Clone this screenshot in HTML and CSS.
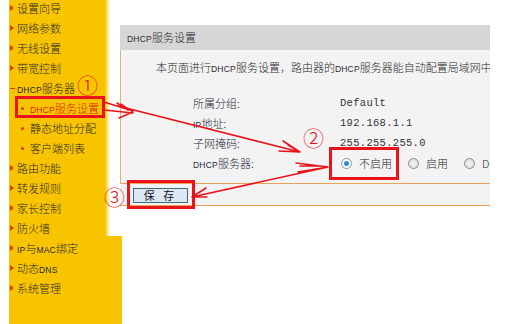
FILE: index.html
```html
<!DOCTYPE html>
<html lang="zh-CN">
<head>
    <meta charset="UTF-8">
    <title>DHCP服务设置</title>
    <link rel="stylesheet" href="styles.css">
</head>
<body>
    <div class="page">
        <ul class="menu">
            <li class="item">设置向导</li>
            <li class="item">网络参数</li>
            <li class="item">无线设置</li>
            <li class="item">带宽控制</li>
            <li class="item open"><span class="en">DHCP</span>服务器</li>
            <li class="sub current"><span class="en">DHCP</span>服务设置</li>
            <li class="sub">静态地址分配</li>
            <li class="sub">客户端列表</li>
            <li class="item">路由功能</li>
            <li class="item">转发规则</li>
            <li class="item">家长控制</li>
            <li class="item">防火墙</li>
            <li class="item"><span class="en">IP</span>与<span class="en">MAC</span>绑定</li>
            <li class="item">动态<span class="en">DNS</span></li>
            <li class="item">系统管理</li>
        </ul>
        <div class="main">
            <div class="panel">
                <div class="panel-head"><span class="en">DHCP</span>服务设置</div>
                <div class="panel-body">
                    <p class="desc">本页面进行<span class="en">DHCP</span>服务设置，路由器的<span class="en">DHCP</span>服务器能自动配置局域网中各</p>
                    <div class="row"><span class="label">所属分组:</span><span class="value mono">Default</span></div>
                    <div class="row"><span class="label"><span class="en">IP</span>地址:</span><span class="value mono">192.168.1.1</span></div>
                    <div class="row"><span class="label">子网掩码:</span><span class="value mono">255.255.255.0</span></div>
                    <div class="row">
                        <span class="label"><span class="en">DHCP</span>服务器:</span>
                        <span class="value radios">
                            <span class="radio checked"></span><span class="opt">不启用</span>
                            <span class="radio"></span><span class="opt">启用</span>
                            <span class="radio"></span><span class="opt">D</span>
                        </span>
                    </div>
                </div>
                <div class="panel-foot">
                    <button class="btn">保 存</button>
                </div>
            </div>
        </div>
    </div>

    <svg class="marks" width="527" height="324" viewBox="0 0 527 324">
        <g fill="none" stroke="#e8141a" stroke-linecap="round">
            <rect x="16.5" y="97.5" width="87" height="19" stroke-width="3"/>
            <rect x="330.5" y="148.5" width="67" height="30" stroke-width="3"/>
            <rect x="128.5" y="181.5" width="65" height="26" stroke-width="3"/>
            <path d="M104 102 L133 111 M104 110 L133 113 M133 112 L121 104 M133 112 L119 118 M128 110 L117 103" stroke-width="1.5"/>
            <path d="M118 106 L300 152 M300 152 L283 141 M300 152 L279 151 M300 152 L288 145" stroke-width="1.5"/>
            <path d="M328 167 L192 197 M192 197 L206 188 M192 197 L207 197 M328 167 L296 163 M328 167 L298 172 M318 166 L300 166" stroke-width="1.5"/>
        </g>
        <g fill="#e8141a" font-family="'Noto Sans CJK SC', sans-serif" font-size="21">
            <text x="77" y="93">①</text>
            <text x="303" y="146">②</text>
            <text x="104" y="205">③</text>
        </g>
    </svg>
</body>
</html>
```

FILE: styles.css
```css
* {
    margin: 0;
    padding: 0;
    box-sizing: border-box;
}
body {
    width: 527px;
    height: 324px;
    overflow: hidden;
    background: #ffffff;
    font-family: 'Noto Sans CJK SC', 'DejaVu Sans', sans-serif;
    font-weight: 300;
    color: #2a2a2a;
    position: relative;
}
.en {
    font-family: 'Liberation Sans', sans-serif;
    font-size: 8.5px;
    letter-spacing: 0.2px;
}
.page {
    display: flex;
    height: 324px;
}
.menu {
    list-style: none;
    margin-left: 9px;
    width: 113px;
    flex-shrink: 0;
    background: #f8c400;
    margin-top: -2px;
    height: 326px;
}
.menu li {
    height: 20px;
    line-height: 20px;
    font-size: 11px;
    position: relative;
    white-space: nowrap;
}
.item {
    padding-left: 8px;
}
.item::before {
    content: '';
    position: absolute;
    left: 1px;
    top: 7px;
    border-left: 4px solid #e03a10;
    border-top: 3px solid transparent;
    border-bottom: 3px solid transparent;
}
.item.open::before {
    border: none;
    width: 5px;
    height: 1px;
    top: 10px;
    background: #e03a10;
}
.sub {
    padding-left: 21px;
}
.sub::before {
    content: '';
    position: absolute;
    left: 12px;
    top: 9px;
    width: 3px;
    height: 3px;
    background: #e03a10;
    border-radius: 50%;
}
.sub.current {
    color: #d42a10;
}
.main {
    flex: 1;
    margin-left: -17px;
    height: 236px;
    background: linear-gradient(to right, rgba(255,255,255,0) 0, #ffffff 5px);
    padding-top: 25px;
    padding-left: 15px;
    overflow: hidden;
}
.panel {
    width: 370px;
    overflow: hidden;
}
.panel-head {
    height: 25px;
    line-height: 25px;
    background: #d6d6d6;
    padding-left: 7px;
    font-size: 11px;
    white-space: nowrap;
}
.panel-body {
    background: #f3f3f3;
    border-left: 1px solid #e2b37a;
    border-bottom: 1px solid #e9a45a;
    height: 134px;
    padding-top: 10px;
}
.desc {
    font-size: 11px;
    line-height: 14px;
    padding-left: 35px;
    white-space: nowrap;
    overflow: hidden;
    margin-bottom: 17px;
}
.row {
    display: flex;
    height: 20px;
    line-height: 20px;
    font-size: 11px;
    white-space: nowrap;
}
.label {
    width: 219px;
    padding-left: 72px;
    flex-shrink: 0;
    color: #1e2a3a;
}
.mono {
    font-family: 'Liberation Mono', monospace;
    font-size: 10.5px;
    color: #333;
    letter-spacing: 0.3px;
}
.radios {
    display: flex;
    align-items: center;
    font-size: 11px;
}
.radio {
    width: 11px;
    height: 11px;
    border-radius: 50%;
    border: 1px solid #8a8a8a;
    background: radial-gradient(circle, #f4f4f4 0, #d8d8d8 100%);
    margin-left: 1px;
    margin-right: 7px;
    position: relative;
    flex-shrink: 0;
}
.radio.checked {
    background: #ffffff;
    border-color: #7a9ab8;
}
.radio.checked::after {
    content: '';
    position: absolute;
    left: 2px;
    top: 2px;
    width: 5px;
    height: 5px;
    border-radius: 50%;
    background: #2a8fd0;
}
.opt {
    margin-right: 15px;
}
.panel-foot {
    background: #f3f3f3;
    border-bottom: 1px solid #e9a45a;
    height: 22px;
    padding-top: 4px;
    padding-left: 13px;
}
.btn {
    display: block;
    width: 55px;
    height: 15px;
    background: #dbe8f4;
    border: 1px solid #3d6b78;
    font-family: 'Noto Sans CJK SC', sans-serif;
    font-size: 11px;
    line-height: 13px;
    letter-spacing: 3px;
    color: #111;
}
.marks {
    position: absolute;
    left: 0;
    top: 0;
    pointer-events: none;
}
```
